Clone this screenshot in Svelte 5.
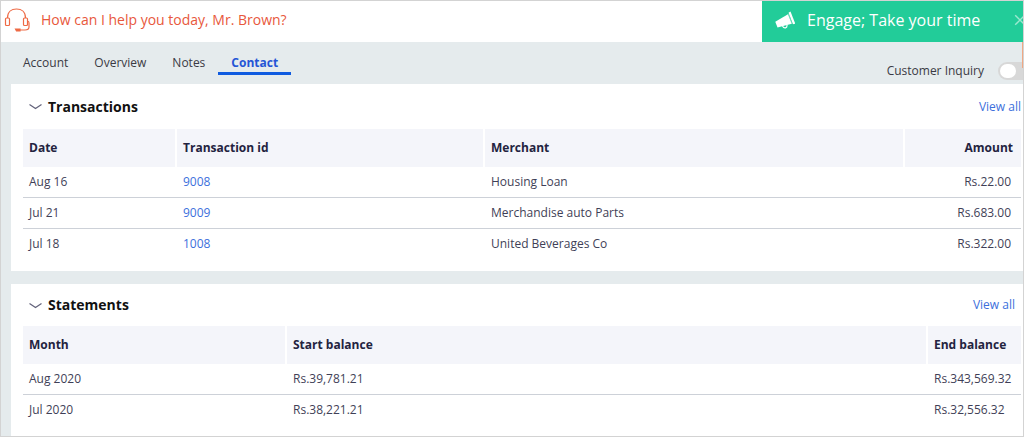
<script>
  const tabs = ["Account", "Overview", "Notes", "Contact"];
  let activeTab = $state("Contact");
  let inquiry = $state(false);
  let alertOpen = $state(true);

  let sections = $state([
    {
      id: "transactions",
      title: "Transactions",
      open: true,
      columns: ["Date", "Transaction id", "Merchant", "Amount"],
      rows: [
        ["Aug 16", "9008", "Housing Loan", "Rs.22.00"],
        ["Jul 21", "9009", "Merchandise auto Parts", "Rs.683.00"],
        ["Jul 18", "1008", "United Beverages Co", "Rs.322.00"]
      ]
    },
    {
      id: "statements",
      title: "Statements",
      open: true,
      columns: ["Month", "Start balance", "End balance"],
      rows: [
        ["Aug 2020", "Rs.39,781.21", "Rs.343,569.32"],
        ["Jul 2020", "Rs.38,221.21", "Rs.32,556.32"]
      ]
    }
  ]);
</script>

<div class="app">
  <header>
    <svg class="headset" viewBox="0 0 26 26" aria-hidden="true">
      <path d="M3.500 11C3.500 5 7.500 2 12.500 2S21.500 5 21.500 11" />
      <rect x="1.500" y="11" width="4" height="7.500" rx="1" />
      <rect x="19.500" y="11" width="4" height="7.500" rx="1" />
      <path d="M23.500 14q1.500 0 1.500 2v4q0 3-4 3h-5" />
      <path class="mic" d="M11.500 22h4.500v2h-3.500z" />
    </svg>
    <p class="greeting">How can I help you today, Mr. Brown?</p>

    {#if alertOpen}
      <div class="alert" role="status">
        <svg class="horn" viewBox="0 0 20 18" aria-hidden="true">
          <path d="M0.300 10.800L13 3.200l3.800 9.600-14.300 3.700z" />
          <path d="M13.500 1.800l2-1.200 4.700 12-2.200 .6z" />
          <path class="seam" d="M13.400 3l3.800 9.800" />
          <path class="handle" d="M7.500 15q1.200 2.300 3 1.800t1.500-3" />
        </svg>
        <span>Engage; Take your time</span>
        <button class="close" aria-label="Dismiss" onclick={() => (alertOpen = false)}>
          <svg viewBox="0 0 10 10" aria-hidden="true">
            <path d="M1 1l8 8M9 1l-8 8" />
          </svg>
        </button>
      </div>
    {/if}
  </header>

  <div class="bar">
    <nav>
      {#each tabs as tab}
        <button class="tab" class:active={tab === activeTab} onclick={() => (activeTab = tab)}>
          {tab}
        </button>
      {/each}
    </nav>
    <label class="inquiry">
      Customer Inquiry
      <input type="checkbox" bind:checked={inquiry} />
    </label>
    <span class="marker"></span>
  </div>

  <main>
    {#each sections as section}
      <section class={section.id}>
        <div class="title">
          <h2>
            <button aria-expanded={section.open} onclick={() => (section.open = !section.open)}>
              <svg class="chevron" viewBox="0 0 13 7" aria-hidden="true">
                <path d="M0.500 1.500l6 4 6-4" />
              </svg>
              {section.title}
            </button>
          </h2>
          <a href={`#/${section.id}`}>View all</a>
        </div>

        {#if section.open}
          <table>
            <thead>
              <tr>
                {#each section.columns as column}
                  <th scope="col">{column}</th>
                {/each}
              </tr>
            </thead>
            <tbody>
              {#each section.rows as row}
                <tr>
                  {#each row as cell, i}
                    <td>
                      {#if section.columns[i] === "Transaction id"}
                        <a href={`#/transactions/${cell}`}>{cell}</a>
                      {:else}
                        {cell}
                      {/if}
                    </td>
                  {/each}
                </tr>
              {/each}
            </tbody>
          </table>
        {/if}
      </section>
    {/each}
  </main>
</div>

<style>
  :global(body) {
    margin: 0;
    background: #e5ebed;
  }
  .app {
    min-height: 100vh;
    box-sizing: border-box;
    display: flex;
    flex-direction: column;
    border: 1px solid #d3d3d3;
    overflow: hidden;
    background: #e5ebed;
    color: #3f3f57;
    font-family: "Open Sans", "Noto Sans", sans-serif;
    font-size: 12px;
    line-height: 18px;
  }
  button {
    padding: 0;
    border: 0;
    background: none;
    color: inherit;
    font: inherit;
    cursor: pointer;
  }
  a {
    color: #3c6fdc;
    text-decoration: none;
  }
  a:hover {
    text-decoration: underline;
  }

  header {
    display: flex;
    align-items: center;
    height: 41px;
    padding-left: 3px;
    background: #fff;
  }
  .headset {
    width: 26px;
    height: 26px;
    margin-right: 11px;
    margin-bottom: 4px;
    fill: none;
    stroke: #ee6a45;
    stroke-width: 1.2;
  }
  .headset .mic {
    fill: #ee6a45;
  }
  .greeting {
    flex: 1;
    margin: 0;
    padding-bottom: 4px;
    color: #e8583c;
    font-size: 14px;
  }
  .alert {
    display: flex;
    align-items: center;
    align-self: stretch;
    width: 261px;
    box-sizing: border-box;
    padding: 0 0 4px 13px;
    background: #22cc99;
    color: #fff;
    font-size: 16px;
    white-space: nowrap;
  }
  .horn {
    width: 20px;
    height: 18px;
    margin-right: 12px;
    fill: #fff;
  }
  .horn .seam {
    stroke: #8fe5cb;
    stroke-width: 0.6;
  }
  .horn .handle {
    fill: none;
    stroke: #fff;
    stroke-width: 1.2;
  }
  .close {
    display: flex;
    margin-left: auto;
    margin-right: -3px;
  }
  .close svg {
    width: 12px;
    height: 12px;
    fill: none;
    stroke: #9be8cf;
    stroke-width: 1.2;
  }

  .bar {
    position: relative;
    display: flex;
    justify-content: space-between;
    height: 42px;
    padding-left: 9px;
  }
  nav {
    display: flex;
    align-items: flex-start;
  }
  .tab {
    padding: 12px 13px 0;
    border-bottom: 3px solid transparent;
    color: #3a3a44;
  }
  .tab.active {
    border-color: #0f5be0;
    color: #2455d6;
    font-weight: 700;
  }
  .inquiry {
    display: flex;
    align-items: center;
    gap: 14px;
    padding-top: 16px;
    margin-right: -9px;
    color: #3a3a44;
  }
  .inquiry input {
    appearance: none;
    display: flex;
    width: 34px;
    height: 18px;
    box-sizing: border-box;
    margin: 0;
    padding: 2px;
    border-radius: 9px;
    background: #d8d8d8;
  }
  .inquiry input::before {
    content: "";
    width: 16px;
    height: 14px;
    border-radius: 8px;
    background: #fff;
  }
  .inquiry input:checked {
    justify-content: flex-end;
    background: #2455d6;
  }
  .marker {
    position: absolute;
    top: 0;
    right: 0;
    width: 1px;
    height: 26px;
    background: #f0a884;
  }

  main {
    flex: 1;
    display: flex;
    flex-direction: column;
    gap: 13px;
    padding-left: 10px;
  }
  section {
    padding: 0 2px 12px 12px;
    background: #fff;
  }
  section:last-child {
    flex: 1;
    padding-bottom: 0;
  }
  .title {
    display: flex;
    align-items: center;
    justify-content: space-between;
    height: 45px;
    padding-left: 6px;
  }
  .statements .title {
    height: 42px;
    padding-right: 6px;
  }
  h2 {
    margin: 0;
    color: #111;
    font-size: 14px;
    font-weight: 700;
  }
  h2 button {
    display: flex;
    align-items: center;
    gap: 6px;
  }
  .chevron {
    width: 13px;
    height: 7px;
    fill: none;
    stroke: #62627a;
    stroke-width: 1.2;
  }

  table {
    width: 100%;
    border-spacing: 0;
    table-layout: fixed;
  }
  th,
  td {
    box-sizing: border-box;
    padding: 0 6px;
    text-align: left;
    white-space: nowrap;
  }
  th {
    height: 38px;
    border-right: 2px solid #fff;
    background: #f4f5fa;
    color: #23233f;
    font-weight: 700;
  }
  th:last-child {
    border-right: 0;
  }
  td {
    height: 31px;
    border-bottom: 1px solid #cdd1d8;
  }
  tr:last-child td {
    height: 30px;
    border-bottom: 0;
  }
  .transactions th:nth-child(1) {
    width: 154px;
  }
  .transactions th:nth-child(2) {
    width: 308px;
  }
  .transactions th:nth-child(4) {
    width: 116px;
  }
  .transactions :is(th, td):last-child {
    padding-right: 8px;
    text-align: right;
  }
  .transactions td:last-child {
    padding-right: 10px;
  }
  .statements th:nth-child(1) {
    width: 264px;
  }
  .statements th:nth-child(3) {
    width: 93px;
  }
</style>
